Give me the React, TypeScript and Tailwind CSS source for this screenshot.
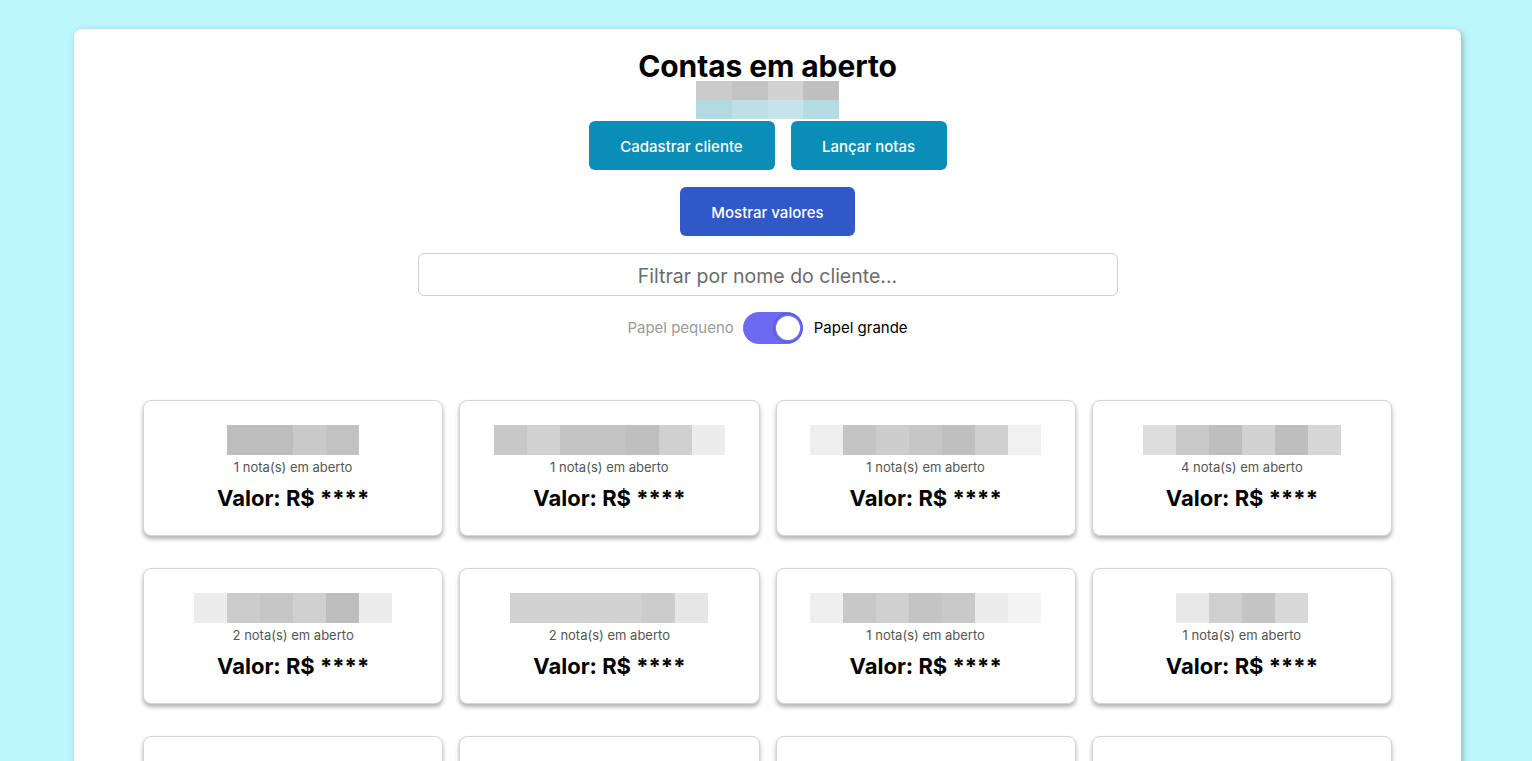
import { useState } from "react";

type Conta = {
	notas: number;
	blocos: string[];
}

const contas: Conta[] = [
	{ notas: 1, blocos: ["#bdbdbd", "#bdbdbd", "#c9c9c9", "#c2c2c2"] },
	{ notas: 1, blocos: ["#c8c8c8", "#d2d2d2", "#c4c4c4", "#c4c4c4", "#bfbfbf", "#d0d0d0", "#ececec"] },
	{ notas: 1, blocos: ["#eeeeee", "#c4c4c4", "#cdcdcd", "#c6c6c6", "#bfbfbf", "#cfcfcf", "#f0f0f0"] },
	{ notas: 4, blocos: ["#dcdcdc", "#c9c9c9", "#bebebe", "#d2d2d2", "#bebebe", "#d6d6d6"] },
	{ notas: 2, blocos: ["#ececec", "#cccccc", "#c6c6c6", "#d0d0d0", "#bdbdbd", "#ececec"] },
	{ notas: 2, blocos: ["#d2d2d2", "#d2d2d2", "#d2d2d2", "#d2d2d2", "#cccccc", "#e6e6e6"] },
	{ notas: 1, blocos: ["#eeeeee", "#c8c8c8", "#d0d0d0", "#c4c4c4", "#c9c9c9", "#ececec", "#f3f3f3"] },
	{ notas: 1, blocos: ["#e8e8e8", "#cfcfcf", "#c4c4c4", "#d8d8d8"] },
	{ notas: 3, blocos: ["#d0d0d0", "#c8c8c8", "#d4d4d4"] },
	{ notas: 1, blocos: ["#cccccc", "#c4c4c4", "#d2d2d2", "#c8c8c8"] },
	{ notas: 2, blocos: ["#d8d8d8", "#c2c2c2", "#cccccc"] },
	{ notas: 1, blocos: ["#c9c9c9", "#d2d2d2", "#c6c6c6", "#dedede"] },
]

const CardConta = ({ conta }: { conta: Conta }) => {
	return (
		<div className="bg-white border border-[#d4d4d4] rounded-lg shadow-[0_3px_4px_rgba(0,0,0,0.3)] h-[136px] flex flex-col items-center pt-[24px]">
			<div className="flex h-[30px]">
				{conta.blocos.map((cor, i) => (
					<div key={i} className="w-[33px] h-full" style={{ backgroundColor: cor }} />
				))}
			</div>
			<div className="text-[13px] text-[#555] mt-[4px] leading-4">{conta.notas} nota(s) em aberto</div>
			<div className="text-[22px] font-bold text-black mt-[9px] leading-7">Valor: R$ ****</div>
		</div>
	);
}

export default function App() {
	const [grande, setGrande] = useState(true)

	return (
		<div className="min-h-screen bg-[#bdf6fd] pl-[74px] pr-[71px] pt-[29px] font-['Inter','Roboto',sans-serif]">

			<div className="bg-white rounded-lg shadow-[2px_2px_6px_rgba(0,0,0,0.25)] min-h-[760px] px-[69px] pt-[22px] pb-10 flex flex-col items-center">

				<h1 className="text-[30px] font-bold text-black leading-[30px] tracking-[-0.1px]">Contas em aberto</h1>

				<div className="w-[143px] h-[38px] flex flex-col">
					<div className="h-1/2 flex">
						<div className="flex-1 bg-[#cbcbcb]" />
						<div className="flex-1 bg-[#c3c3c3]" />
						<div className="flex-1 bg-[#d2d2d2]" />
						<div className="flex-1 bg-[#c0c0c0]" />
					</div>
					<div className="h-1/2 flex">
						<div className="flex-1 bg-[#b3d9e2]" />
						<div className="flex-1 bg-[#bfdfe7]" />
						<div className="flex-1 bg-[#c5e3ea]" />
						<div className="flex-1 bg-[#b5dbe4]" />
					</div>
				</div>

				<div className="flex gap-4 mt-[2px]">
					<button className="w-[186px] h-[49px] rounded-md bg-[#0a8eb7] text-white text-[15px] font-medium pt-[3px]">Cadastrar cliente</button>
					<button className="w-[156px] h-[49px] rounded-md bg-[#0a8eb7] text-white text-[15px] font-medium pt-[3px]">Lançar notas</button>
				</div>

				<button className="w-[175px] h-[49px] rounded-md bg-[#3158c8] text-white text-[15px] font-medium mt-[17px] pt-[3px]">Mostrar valores</button>

				<input
					placeholder="Filtrar por nome do cliente..."
					className="w-[700px] h-[43px] mt-[17px] border border-[#cfcfcf] rounded-md text-center text-[19.5px] pt-[3px] placeholder:text-[#6b6b6b] outline-none"
				/>

				<div className="flex items-center gap-[9px] mt-4 text-[15px]">
					<span className="text-[#9a9a9a]">Papel pequeno</span>
					<button
						onClick={() => setGrande(!grande)}
						className="w-[60px] h-[32px] rounded-full bg-[#6c6af2] flex items-center justify-end px-[1px]"
					>
						<span className="w-[28px] h-[28px] rounded-full bg-white border-2 border-[#6c6af2] shadow-[0_0_0_1px_rgba(60,60,140,0.35)]" />
					</button>
					<span className="text-black ml-[2px]">Papel grande</span>
				</div>

				<div className="grid grid-cols-4 gap-x-4 gap-y-[32px] w-full mt-[56px]">
					{contas.map((c, i) => (
						<CardConta key={i} conta={c} />
					))}
				</div>

			</div>

		</div>
	);
}
